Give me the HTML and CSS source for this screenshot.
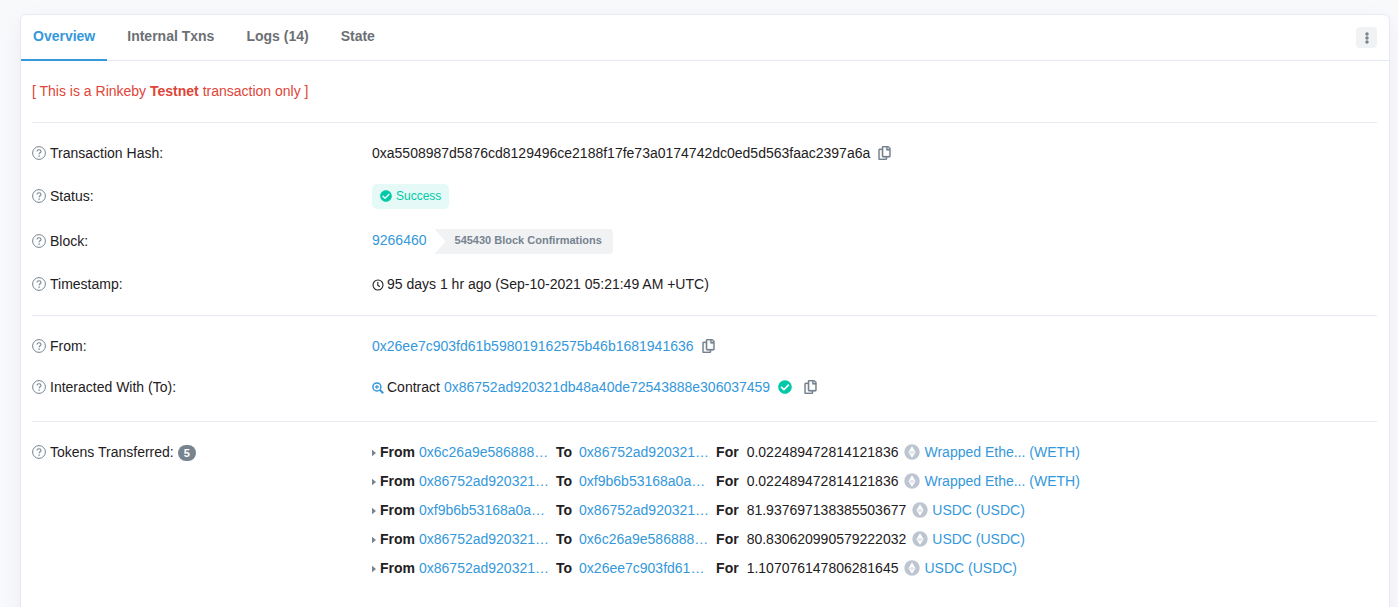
FILE: index.html
```
<!DOCTYPE html>
<html lang="en">
<head>
    <meta charset="UTF-8">
    <meta name="viewport" content="width=device-width, initial-scale=1.0">
    <title>Transaction Details</title>
    <link rel="stylesheet" href="styles.css">
</head>
<body>
    <!-- Shared icons -->
    <svg class="icon-defs" aria-hidden="true">
        <symbol id="i-help" viewBox="0 0 14 14">
            <circle cx="7" cy="7" r="6.4" fill="none" stroke="currentColor"/>
            <path d="M5 5.5C5.1 4.3 5.9 3.7 7 3.7s2 .7 2 1.7c0 1.4-1.9 1.4-1.9 2.9" fill="none" stroke="currentColor" stroke-width="1.1"/>
            <circle cx="7.1" cy="10.1" r=".8" fill="currentColor"/>
        </symbol>
        <symbol id="i-copy" viewBox="0 0 448 512">
            <path fill="currentColor" stroke="currentColor" stroke-width="10" d="M433.941 65.941l-51.882-51.882A48 48 0 0 0 348.118 0H176c-26.51 0-48 21.49-48 48v48H48c-26.51 0-48 21.49-48 48v320c0 26.51 21.49 48 48 48h224c26.51 0 48-21.49 48-48v-48h80c26.51 0 48-21.49 48-48V99.882a48 48 0 0 0-14.059-33.941zM266 464H54a6 6 0 0 1-6-6V150a6 6 0 0 1 6-6h74v224c0 26.51 21.49 48 48 48h96v42a6 6 0 0 1-6 6zm128-96H182a6 6 0 0 1-6-6V54a6 6 0 0 1 6-6h106v88c0 13.255 10.745 24 24 24h88v202a6 6 0 0 1-6 6zm6-256h-64V48h9.632c1.591 0 3.117.632 4.243 1.757l48.368 48.368a6 6 0 0 1 1.757 4.243V112z"/>
        </symbol>
        <symbol id="i-check" viewBox="0 0 512 512">
            <path fill="currentColor" d="M504 256c0 136.967-111.033 248-248 248S8 392.967 8 256 119.033 8 256 8s248 111.033 248 248zM227.314 387.314l184-184c6.248-6.248 6.248-16.379 0-22.627l-22.627-22.627c-6.248-6.249-16.379-6.249-22.628 0L216 308.118l-70.059-70.059c-6.248-6.248-16.379-6.248-22.628 0l-22.627 22.627c-6.248 6.248-6.248 16.379 0 22.627l104 104c6.249 6.249 16.379 6.249 22.628.001z"/>
        </symbol>
        <symbol id="i-clock" viewBox="0 0 12 12">
            <circle cx="6" cy="6" r="5" fill="none" stroke="currentColor" stroke-width="1.1"/>
            <path d="M5.8 3v3.2l2 1.5" fill="none" stroke="currentColor" stroke-width="1.1"/>
        </symbol>
        <symbol id="i-zoom" viewBox="0 0 12 12">
            <circle cx="4.9" cy="4.9" r="4" fill="none" stroke="currentColor" stroke-width="1.5"/>
            <path d="M8 8l3.2 3.2" fill="none" stroke="currentColor" stroke-width="2"/>
            <path d="M2.9 4.9h4M4.9 2.9v4" fill="none" stroke="currentColor" stroke-width="1.1"/>
        </symbol>
        <symbol id="i-caret" viewBox="0 0 4 8">
            <path fill="currentColor" d="M0 .8L4 4 0 7.2z"/>
        </symbol>
        <symbol id="i-token" viewBox="0 0 16 16">
            <circle cx="8" cy="8" r="7.7" fill="#bdc5d1"/>
            <path fill="#fff" d="M8 2.2l3.6 6L8 13.8 4.4 8.2z"/>
            <path fill="#e3e7ed" d="M4.4 8.2L8 6.8l3.6 1.4L8 10.4z"/>
        </symbol>
    </svg>

    <main class="card">
        <header class="card-header">
            <nav class="tabs">
                <a class="tab active" href="#overview">Overview</a>
                <a class="tab" href="#internal">Internal Txns</a>
                <a class="tab" href="#eventlog">Logs (14)</a>
                <a class="tab" href="#statechange">State</a>
            </nav>
            <button class="menu-btn" type="button" aria-label="More options">
                <svg width="4" height="12" viewBox="0 0 4 12"><g fill="currentColor"><circle cx="2" cy="2" r="1.7"/><circle cx="2" cy="6" r="1.7"/><circle cx="2" cy="10" r="1.7"/></g></svg>
            </button>
        </header>

        <div class="card-body" id="overview">
            <p class="notice">[ This is a Rinkeby <strong>Testnet</strong> transaction only ]</p>

            <!-- Transaction -->
            <dl class="group">
                <div class="row">
                    <dt><svg class="help"><use href="#i-help"/></svg>Transaction Hash:</dt>
                    <dd>0xa5508987d5876cd8129496ce2188f17fe73a0174742dc0ed5d563faac2397a6a
                        <button class="copy-btn" type="button" aria-label="Copy hash"><svg><use href="#i-copy"/></svg></button></dd>
                </div>
                <div class="row">
                    <dt><svg class="help"><use href="#i-help"/></svg>Status:</dt>
                    <dd><span class="status"><svg><use href="#i-check"/></svg>Success</span></dd>
                </div>
                <div class="row">
                    <dt><svg class="help"><use href="#i-help"/></svg>Block:</dt>
                    <dd><a class="block-link" href="#block">9266460</a><span class="confirmations">545430 Block Confirmations</span></dd>
                </div>
                <div class="row">
                    <dt><svg class="help"><use href="#i-help"/></svg>Timestamp:</dt>
                    <dd><svg class="small-icon"><use href="#i-clock"/></svg>95 days 1 hr ago (Sep-10-2021 05:21:49 AM +UTC)</dd>
                </div>
            </dl>

            <!-- Addresses -->
            <dl class="group addresses">
                <div class="row">
                    <dt><svg class="help"><use href="#i-help"/></svg>From:</dt>
                    <dd><a href="#from">0x26ee7c903fd61b598019162575b46b1681941636</a>
                        <button class="copy-btn" type="button" aria-label="Copy from address"><svg><use href="#i-copy"/></svg></button></dd>
                </div>
                <div class="row">
                    <dt><svg class="help"><use href="#i-help"/></svg>Interacted With (To):</dt>
                    <dd><svg class="small-icon contract-icon"><use href="#i-zoom"/></svg><span class="contract-label">Contract</span><a href="#to">0x86752ad920321db48a40de72543888e306037459</a>
                        <svg class="verified"><use href="#i-check"/></svg>
                        <button class="copy-btn verified-copy" type="button" aria-label="Copy contract address"><svg><use href="#i-copy"/></svg></button></dd>
                </div>
            </dl>

            <!-- Token transfers -->
            <dl class="group">
                <div class="row">
                    <dt><svg class="help"><use href="#i-help"/></svg>Tokens Transferred:<span class="count">5</span></dt>
                    <dd>
                        <ul class="transfers">
                            <li><svg class="caret"><use href="#i-caret"/></svg><b>From</b><a class="addr" href="#a1">0x6c26a9e586888…</a><b class="to">To</b><a class="addr" href="#a2">0x86752ad920321…</a><b class="for">For</b><span>0.022489472814121836</span><svg class="token"><use href="#i-token"/></svg><a href="#weth">Wrapped Ethe... (WETH)</a></li>
                            <li><svg class="caret"><use href="#i-caret"/></svg><b>From</b><a class="addr" href="#a2">0x86752ad920321…</a><b class="to">To</b><a class="addr" href="#a3">0xf9b6b53168a0a…</a><b class="for">For</b><span>0.022489472814121836</span><svg class="token"><use href="#i-token"/></svg><a href="#weth">Wrapped Ethe... (WETH)</a></li>
                            <li><svg class="caret"><use href="#i-caret"/></svg><b>From</b><a class="addr" href="#a3">0xf9b6b53168a0a…</a><b class="to">To</b><a class="addr" href="#a2">0x86752ad920321…</a><b class="for">For</b><span>81.937697138385503677</span><svg class="token"><use href="#i-token"/></svg><a href="#usdc">USDC (USDC)</a></li>
                            <li><svg class="caret"><use href="#i-caret"/></svg><b>From</b><a class="addr" href="#a2">0x86752ad920321…</a><b class="to">To</b><a class="addr" href="#a1">0x6c26a9e586888…</a><b class="for">For</b><span>80.830620990579222032</span><svg class="token"><use href="#i-token"/></svg><a href="#usdc">USDC (USDC)</a></li>
                            <li><svg class="caret"><use href="#i-caret"/></svg><b>From</b><a class="addr" href="#a2">0x86752ad920321…</a><b class="to">To</b><a class="addr" href="#a4">0x26ee7c903fd61…</a><b class="for">For</b><span>1.107076147806281645</span><svg class="token"><use href="#i-token"/></svg><a href="#usdc">USDC (USDC)</a></li>
                        </ul>
                    </dd>
                </div>
            </dl>
        </div>
    </main>
</body>
</html>
```
FILE: styles.css
```
* {
    box-sizing: border-box;
}

body {
    margin: 0;
    padding: 14px 8px 0 20px;
    background-color: #f8f9fb;
    color: #1e2022;
    font-family: "Liberation Sans", Arial, sans-serif;
    font-size: 14px;
    line-height: 21px;
}

a {
    color: #3498db;
    text-decoration: none;
}

a:hover {
    color: #1d6fa5;
}

button {
    padding: 0;
    border: none;
    font: inherit;
    cursor: pointer;
}

svg {
    flex-shrink: 0;
}

.icon-defs {
    display: none;
}

.card {
    background-color: #fff;
    border: 1px solid #e7eaf3;
    border-radius: 6px;
    box-shadow: 0 8px 20px rgba(189, 197, 209, 0.2);
}

.card-header {
    display: flex;
    justify-content: space-between;
    align-items: center;
    padding-right: 12px;
    border-bottom: 1px solid #e7eaf3;
}

.tabs {
    display: flex;
    gap: 8px;
    margin-bottom: -1px;
}

.tab {
    padding: 11px 12px 12px;
    border-bottom: 2px solid transparent;
    color: #6c7074;
    font-weight: bold;
}

.tab.active {
    color: #3498db;
    border-bottom-color: #3498db;
}

.menu-btn {
    display: flex;
    justify-content: center;
    align-items: center;
    width: 21px;
    height: 21px;
    border-radius: 4px;
    background-color: #f1f2f4;
    color: #77838f;
}

.card-body {
    padding: 20px 12px 20px 11px;
}

.notice {
    margin: 0 0 20px;
    color: #de4437;
}

.group {
    display: flex;
    flex-direction: column;
    gap: 20px;
    margin: 0;
    padding: 20px 0;
    border-top: 1px solid #e7eaf3;
}

.addresses {
    padding-bottom: 23px;
}

.row {
    display: grid;
    grid-template-columns: 1fr 3fr;
    column-gap: 5px;
}

dt, dd {
    display: flex;
    align-items: center;
    margin: 0;
}

dt {
    align-self: center;
}

.row:has(.transfers) dt {
    align-self: start;
}

.help {
    width: 14px;
    height: 14px;
    margin: 0 4px 1px 0;
    color: #77838f;
}

.copy-btn {
    display: flex;
    margin: 0 0 1px 8px;
    background: none;
    color: #77838f;
}

.copy-btn svg {
    width: 13px;
    height: 14px;
}

.status {
    display: flex;
    align-items: center;
    gap: 4px;
    height: 25px;
    padding: 0 8px;
    border-radius: 5px;
    background-color: #e5f9f6;
    color: #00c9a7;
    font-size: 12px;
}

.status svg {
    width: 12px;
    height: 12px;
    margin-bottom: 1px;
}

.block-link {
    padding-bottom: 3px;
}

.confirmations {
    height: 25px;
    margin-left: 8px;
    padding: 0 11px 0 20px;
    border-radius: 0 4px 4px 0;
    background-color: #f1f2f4;
    color: #77838f;
    font-size: 11px;
    font-weight: bold;
    line-height: 23px;
    clip-path: polygon(0 0, 100% 0, 100% 100%, 0 100%, 11px 50%);
}

.small-icon {
    width: 12px;
    height: 12px;
    margin-right: 3px;
}

.contract-icon {
    color: #3498db;
}

.contract-label {
    margin-right: 4px;
}

.verified {
    width: 14px;
    height: 14px;
    margin: 0 0 1px 8px;
    color: #00c9a7;
}

.verified-copy {
    margin-left: 12px;
}

.count {
    height: 16px;
    margin-left: 4px;
    padding: 0 6px;
    border-radius: 8px;
    background-color: #77838f;
    color: #fff;
    font-size: 11px;
    font-weight: bold;
    line-height: 16px;
}

.transfers {
    display: flex;
    flex-direction: column;
    gap: 8px;
    margin: 0;
    padding: 0 0 20px;
    list-style: none;
}

.transfers li {
    display: flex;
    align-items: center;
    gap: 4px;
}

.caret {
    width: 4px;
    height: 8px;
    color: #77838f;
}

.addr {
    width: 133px;
}

.to + .addr {
    margin-left: 3px;
}

.for {
    margin-right: 4px;
}

.token {
    width: 16px;
    height: 16px;
    margin: 0 0 1px 2px;
}
```
